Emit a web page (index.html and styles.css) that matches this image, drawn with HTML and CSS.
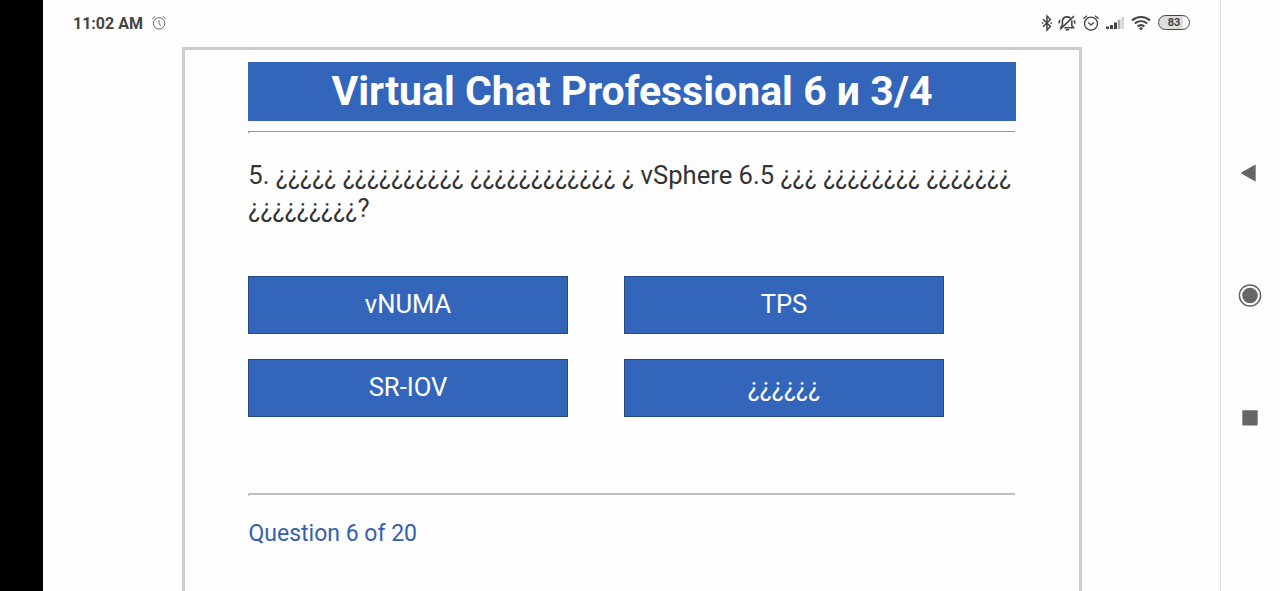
FILE: index.html
```
<!DOCTYPE html>
<html lang="en">
<head>
    <meta charset="UTF-8">
    <meta name="viewport" content="width=device-width, initial-scale=1.0">
    <title>Virtual Chat Professional 6 и 3/4</title>
    <link rel="stylesheet" href="styles.css">
</head>
<body>
    <div class="screen">
        <div class="cutout"></div>

        <div class="main">
            <!-- Status bar -->
            <div class="status-bar">
                <div class="status-left">
                    <span class="clock">11:02 AM</span>
                    <svg width="16" height="16" viewBox="0 0 16 16" fill="none" stroke="#666" stroke-width="1">
                        <circle cx="8" cy="8.4" r="5.7"/>
                        <path d="M8 5v3.8l2 1.8M1.2 4l3.2-2.8M14.8 4l-3.2-2.8"/>
                    </svg>
                </div>
                <div class="status-right">
                    <svg width="12" height="18" viewBox="0 0 12 18" fill="none" stroke="#444" stroke-width="1.5">
                        <path d="M3 5.3l7.4 7.2L7 16V2l3.4 3.5L3 12.7"/>
                        <path d="M1.8 9h1.6M10.4 9H12"/>
                    </svg>
                    <svg width="18" height="18" viewBox="0 0 18 18" fill="none" stroke="#444" stroke-width="1.6">
                        <path d="M4.4 11.2V7.6c0-2.9 2-4.7 4.8-4.7 1.3 0 2.4.4 3.2 1.2M13.8 6.4v5l1.6 2.4H6.4"/>
                        <path d="M2 15.4L16 2.2M7.6 15.8h3.4M1.8 5.8L1 9.4M16.2 6.2l.8 3.4M4.4 11.2l-1.8 2.3"/>
                    </svg>
                    <svg width="18" height="18" viewBox="0 0 18 18" fill="none" stroke="#444" stroke-width="1.3">
                        <circle cx="9" cy="9.6" r="6.5"/>
                        <path d="M6.2 8.6L9 10.9l2.9-2.3M1.4 4.8l3.6-3M16.6 4.8L13 1.8"/>
                    </svg>
                    <svg width="19" height="18" viewBox="0 0 19 18">
                        <path fill="#444" d="M0 12.6h3V15H0zM4 11h3v4H4zM8 8.6h3V15H8z"/>
                        <path fill="#aaa" d="M11.8 5.8h2.6V15h-2.6z"/>
                        <path fill="#d0d0d0" d="M15.4 2.8h2.4V15h-2.4z"/>
                    </svg>
                    <svg width="20" height="18" viewBox="0 0 20 18" fill="none" stroke="#444" stroke-width="2.1">
                        <path d="M1 6.4c5.2-4.5 12.8-4.5 18 0M3.8 9.5c3.7-3 8.7-3 12.4 0M6.6 12.4c2.1-1.6 4.7-1.6 6.8 0"/>
                        <path fill="#444" stroke="none" d="M7.8 14.1c1.4-1 3-1 4.4 0L10 16.4z"/>
                    </svg>
                    <span class="battery">83</span>
                </div>
            </div>

            <!-- Quiz -->
            <div class="quiz">
                <h1>Virtual Chat Professional 6 и 3/4</h1>
                <hr class="rule-top">
                <p class="question">5. ¿¿¿¿¿ ¿¿¿¿¿¿¿¿¿¿ ¿¿¿¿¿¿¿¿¿¿¿¿ ¿ vSphere 6.5 ¿¿¿ ¿¿¿¿¿¿¿¿ ¿¿¿¿¿¿¿ ¿¿¿¿¿¿¿¿¿?</p>
                <div class="answers">
                    <button>vNUMA</button>
                    <button>TPS</button>
                    <button>SR-IOV</button>
                    <button>¿¿¿¿¿¿</button>
                </div>
                <hr class="rule-bottom">
                <p class="progress">Question 6 of 20</p>
            </div>
        </div>

        <!-- Navigation keys -->
        <div class="nav-bar">
            <svg width="24" height="24" viewBox="0 0 24 24" fill="#666">
                <path d="M3.6 11.3L17 3.7q.7-.3.7.5v15.6q0 .8-.7.5L3.6 12.7q-1-.7 0-1.4z"/>
            </svg>
            <svg width="24" height="24" viewBox="0 0 24 24">
                <circle cx="12" cy="12.5" r="10.6" fill="none" stroke="#666" stroke-width="1.5"/>
                <circle cx="12" cy="12.5" r="7.8" fill="#666"/>
            </svg>
            <svg width="24" height="24" viewBox="0 0 24 24">
                <rect x="4.3" y="5.2" width="15.4" height="15.4" rx="1" fill="#666"/>
            </svg>
        </div>
    </div>
</body>
</html>
```
FILE: styles.css
```
* {
    margin: 0;
    padding: 0;
    box-sizing: border-box;
}

body {
    font-family: Roboto, sans-serif;
    background: #fefefe;
    color: #333;
    overflow: hidden;
}

.screen {
    display: grid;
    grid-template-columns: 43px 1fr 60px;
    height: 100vh;
}

.cutout {
    background: #000;
}

.main {
    display: flex;
    flex-direction: column;
    overflow: hidden;
}

/* Status bar */
.status-bar {
    display: flex;
    justify-content: space-between;
    align-items: center;
    flex: none;
    height: 47px;
    padding: 0 30px 1px 30px;
}

.status-left,
.status-right {
    display: flex;
    align-items: center;
}

.status-left {
    gap: 8px;
}

.clock {
    font-size: 16px;
    font-weight: 700;
    color: #444;
}

.status-right {
    gap: 6px;
}

.battery {
    width: 32px;
    height: 15px;
    margin-left: 1px;
    margin-bottom: 2px;
    border: 1.5px solid #444;
    border-radius: 8px;
    background: linear-gradient(to right, #ddd 80%, #fefefe 80%);
    color: #444;
    font-size: 11px;
    font-weight: 700;
    line-height: 13px;
    text-align: center;
}

/* Quiz */
.quiz {
    flex: 1;
    width: 900px;
    margin-left: 139px;
    padding: 12px 63px 0;
    border: 3px solid #ccc;
    border-bottom: none;
}

.quiz h1 {
    height: 59px;
    background: #3366bb;
    color: #fff;
    font-size: 41px;
    font-weight: 700;
    line-height: 59px;
    text-align: center;
}

.quiz hr {
    width: 767px;
    border: none;
}

.quiz .rule-top {
    margin-top: 10px;
    border-top: 1px solid #999;
    border-left: 1px solid #999;
    height: 2px;
}

.question {
    margin-top: 26px;
    padding-left: 0.3px;
    font-size: 25.6px;
    line-height: 33px;
}

.answers {
    display: grid;
    grid-template-columns: 320px 320px;
    column-gap: 56px;
    row-gap: 25px;
    margin-top: 51px;
}

.answers button {
    height: 58px;
    padding-bottom: 2px;
    background: #3366bb;
    border: 1px solid #234a80;
    color: #fff;
    font-family: inherit;
    font-size: 25.6px;
}

.quiz .rule-bottom {
    margin-top: 76px;
    border-top: 2px solid #c0c0c0;
    border-left: 1px solid #c0c0c0;
    height: 3px;
}

.progress {
    margin-top: 23px;
    padding-left: 0.5px;
    color: #3560ae;
    font-size: 23px;
    line-height: 30px;
}

/* Navigation keys */
.nav-bar {
    display: flex;
    flex-direction: column;
    align-items: center;
    gap: 98px;
    padding-top: 161px;
    padding-right: 1px;
    border-left: 1px solid #ddd;
}
```
